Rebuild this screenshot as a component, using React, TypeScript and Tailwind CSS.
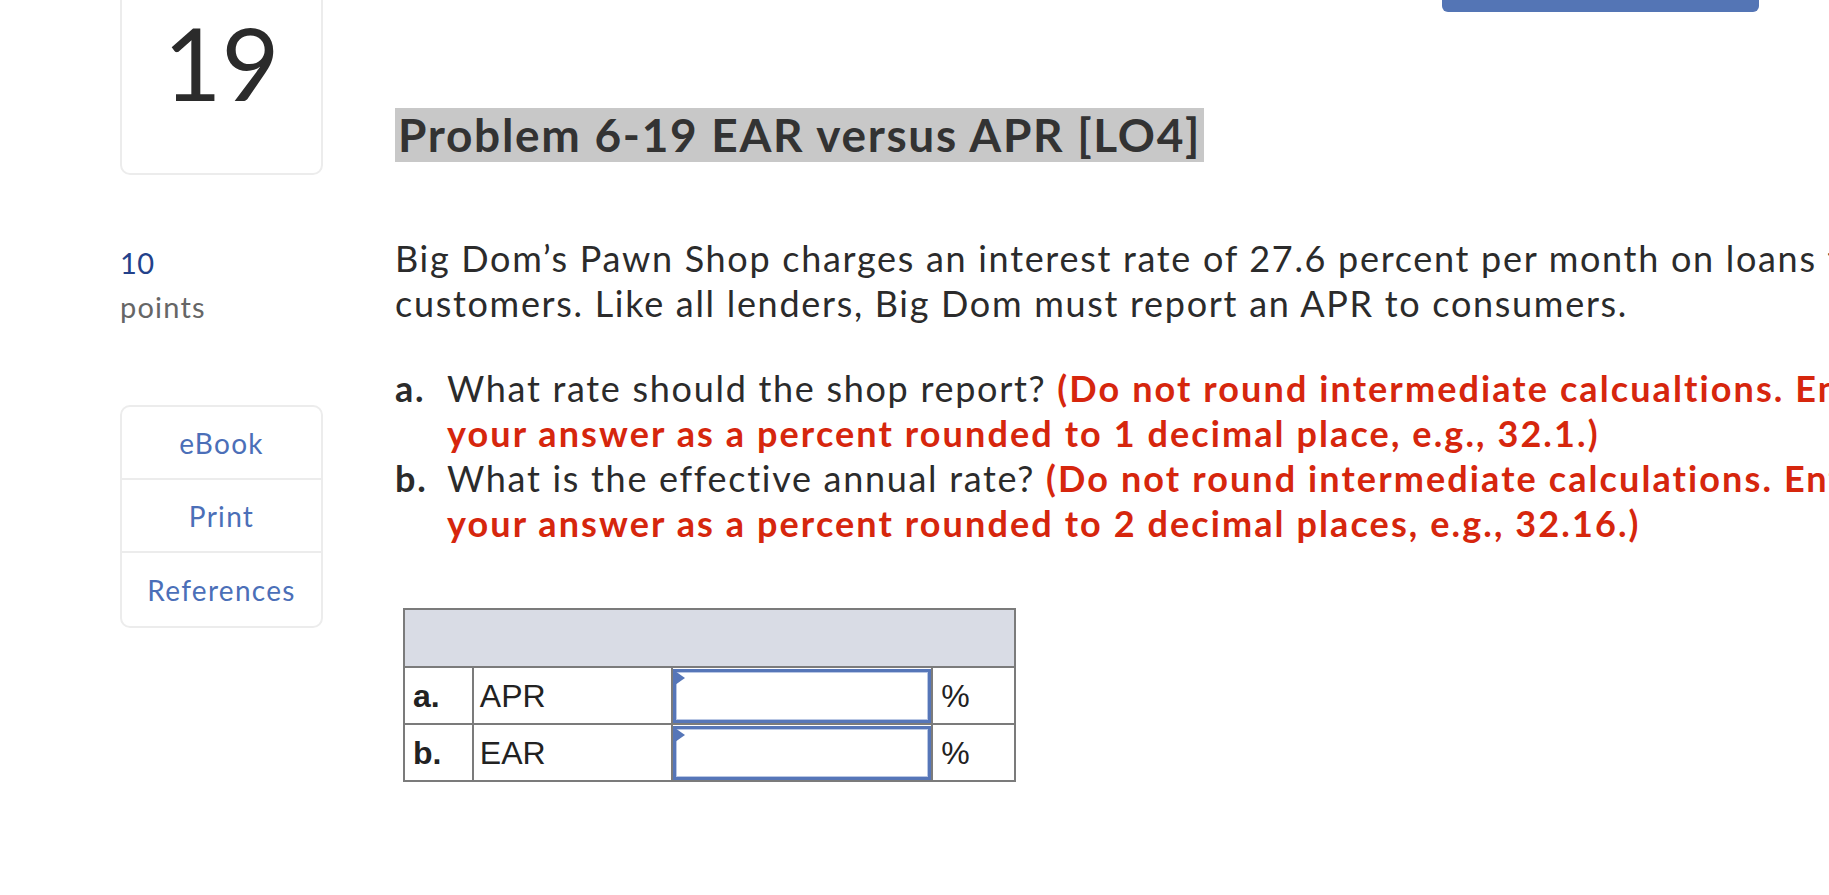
import React from "react";

// one answer row of the worksheet
interface RowProps {
  label: string;
  name: string;
}

const AnswerRow: React.FC<RowProps> = ({ label, name }) => (
  <tr className="h-[57px]">
    <td className="border-2 border-[#7b7b7b] pl-[8px] font-bold">{label}</td>
    <td className="border-2 border-[#7b7b7b] pl-[6px]">{name}</td>
    <td className="border-2 border-[#7b7b7b] p-0">
      <div className="relative h-[54px] border-[3px] border-[#5676b8] bg-white shadow-[inset_0_0_0_1px_#b9c7e4]">
        {/* little marker in the corner of the input */}
        <span className="absolute -left-[1px] -top-[1px] h-0 w-0 border-y-[7px] border-l-[10px] border-y-transparent border-l-[#5676b8]" />
      </div>
    </td>
    <td className="border-2 border-[#7b7b7b] pl-[8px]">%</td>
  </tr>
);

export default function App() {
  return (
    <div className="relative h-[895px] w-full overflow-hidden bg-white font-['Lato',sans-serif] text-[#2b2b2b]">
      <div className="absolute left-[1442px] top-0 h-[12px] w-[317px] rounded-b-[6px] bg-[#5475b5]" />

      <div className="flex pl-[120px]">
        {/* left column */}
        <aside className="w-[203px] shrink-0">
          <div className="-mt-[40px] flex h-[215px] items-center justify-center rounded-[10px] border-2 border-[#ececec] pb-[12px] text-[100px] leading-none text-[#2b2b2b]">
            19
          </div>
          <div className="mt-[70px] text-[29px] leading-[36px] tracking-[0.5px] text-[#23418a]">10</div>
          <div className="mt-[8px] text-[29px] leading-[36px] tracking-[1.2px] text-[#666]">points</div>

          <div className="mt-[80px] overflow-hidden rounded-[10px] border-2 border-[#ececec] text-center text-[28px] tracking-[1.3px] text-[#4b6fb8]">
            <div className="flex h-[73px] items-center justify-center border-b-2 border-[#ececec]">eBook</div>
            <div className="flex h-[73px] items-center justify-center border-b-2 border-[#ececec]">Print</div>
            <div className="flex h-[73px] items-center justify-center">References</div>
          </div>
        </aside>

        {/* question */}
        <main className="ml-[72px] min-w-0 flex-1">
          <h1 className="mt-[108px] inline-block h-[54px] bg-[#c8c8c8] px-[3px] text-[46px] font-bold leading-[54px] tracking-[1.7px] text-[#333]">
            Problem 6-19 EAR versus APR [LO4]
          </h1>

          <p className="mt-[74px] whitespace-nowrap text-[36px] leading-[45px] tracking-[1.7px]">
            Big Dom’s Pawn Shop charges an interest rate of 27.6 percent per month on loans to its
            <br />
            customers. Like all lenders, Big Dom must report an APR to consumers.
          </p>

          <ol className="mt-[40px] whitespace-nowrap text-[36px] leading-[45px] tracking-[1.7px]">
            <li className="flex">
              <span className="w-[52px] shrink-0 font-bold">a.</span>
              <span>
                What rate should the shop report?{" "}
                <b className="tracking-[2.1px] text-[#d6260d]">(Do not round intermediate calcualtions. Enter</b>
                <br />
                <b className="tracking-[2.1px] text-[#d6260d]">your answer as a percent rounded to 1 decimal place, e.g., 32.1.)</b>
              </span>
            </li>
            <li className="flex">
              <span className="w-[52px] shrink-0 font-bold">b.</span>
              <span>
                What is the effective annual rate?{" "}
                <b className="tracking-[2.1px] text-[#d6260d]">(Do not round intermediate calculations. Enter</b>
                <br />
                <b className="tracking-[2.1px] text-[#d6260d]">your answer as a percent rounded to 2 decimal places, e.g., 32.16.)</b>
              </span>
            </li>
          </ol>

          <table className="ml-[8px] mt-[62px] w-[613px] border-collapse font-['Liberation_Sans',Arial,sans-serif] text-[32px] text-[#222]">
            <colgroup>
              <col className="w-[69px]" />
              <col className="w-[200px]" />
              <col className="w-[261px]" />
              <col className="w-[83px]" />
            </colgroup>
            <thead>
              <tr className="h-[58px] bg-[#d9dce5]">
                <th colSpan={4} className="border-2 border-[#7b7b7b]" />
              </tr>
            </thead>
            <tbody>
              <AnswerRow label="a." name="APR" />
              <AnswerRow label="b." name="EAR" />
            </tbody>
          </table>
        </main>
      </div>
    </div>
  );
}
